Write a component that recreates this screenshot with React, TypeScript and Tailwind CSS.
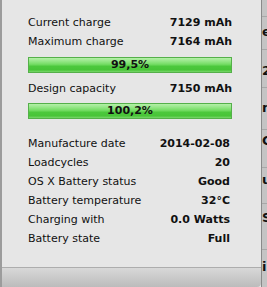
import React from "react";

const font = { fontFamily: '"DejaVu Sans", "Liberation Sans", sans-serif' };

function Row({ label, value }: { label: string; value: string }) {
  return (
    <div className="flex h-[19px] items-center justify-between">
      <span>{label}</span>
      <span className="font-bold">{value}</span>
    </div>
  );
}

function Bar({ text }: { text: string }) {
  return (
    <div className="flex h-[16px] items-center justify-center border border-[#55b04a] bg-[linear-gradient(to_bottom,#b4f0a8_0%,#9ae88c_20%,#74dc64_45%,#4cc83c_60%,#48c438_85%,#7ad86c_100%)] text-[11px] font-bold">
      {text}
    </div>
  );
}

export default function App() {
  return (
    <div
      className="flex h-[287px] w-[267px] overflow-hidden bg-[#c4c4c4] text-[11px] text-[#111]"
      style={font}
    >
      {/* left edge of the window */}
      <div className="w-[2px] bg-[#9c9c9c]" />

      {/* panel */}
      <div className="flex flex-1 flex-col bg-[#e6e6e6]">
        <div className="flex-1 pl-[26px] pr-[29px] pt-[14px]">
          <Row label="Current charge" value="7129 mAh" />
          <Row label="Maximum charge" value="7164 mAh" />
          <div className="mt-[5px]">
            <Bar text="99,5%" />
          </div>
          <div className="mt-[7px]">
            <Row label="Design capacity" value="7150 mAh" />
          </div>
          <div className="mt-[4px]">
            <Bar text="100,2%" />
          </div>
          <div className="mt-[16px] pr-[2px]">
            <Row label="Manufacture date" value="2014-02-08" />
            <Row label="Loadcycles" value="20" />
            <Row label="OS X Battery status" value="Good" />
            <Row label="Battery temperature" value="32°C" />
            <Row label="Charging with" value="0.0 Watts" />
            <Row label="Battery state" value="Full" />
          </div>
        </div>
        <div className="h-[20px] rounded-br-[4px] border-t border-[#adadad] bg-[linear-gradient(to_bottom,#d8d8d8,#bcbcbc)]" />
      </div>

      {/* window behind */}
      <div className="flex w-[6px] flex-col border-l border-[#8a8a8a] text-[13px] font-bold leading-none">
        <div className="h-[17px] border-b border-[#a8a8a8]" />
        <div className="h-[33px] border-b border-[#a8a8a8] pt-[8px]">e</div>
        <div className="h-[38px] border-b border-[#a8a8a8] pt-[14px]">2</div>
        <div className="h-[42px] border-b border-[#a8a8a8] pt-[13px]">n</div>
        <div className="h-[38px] border-b border-[#a8a8a8] pt-[4px]">C</div>
        <div className="h-[36px] border-b border-[#a8a8a8] pt-[5px]">u</div>
        <div className="h-[46px] border-b border-[#a8a8a8] pt-[7px]">S</div>
        <div className="pt-[10px]">i</div>
      </div>
    </div>
  );
}
